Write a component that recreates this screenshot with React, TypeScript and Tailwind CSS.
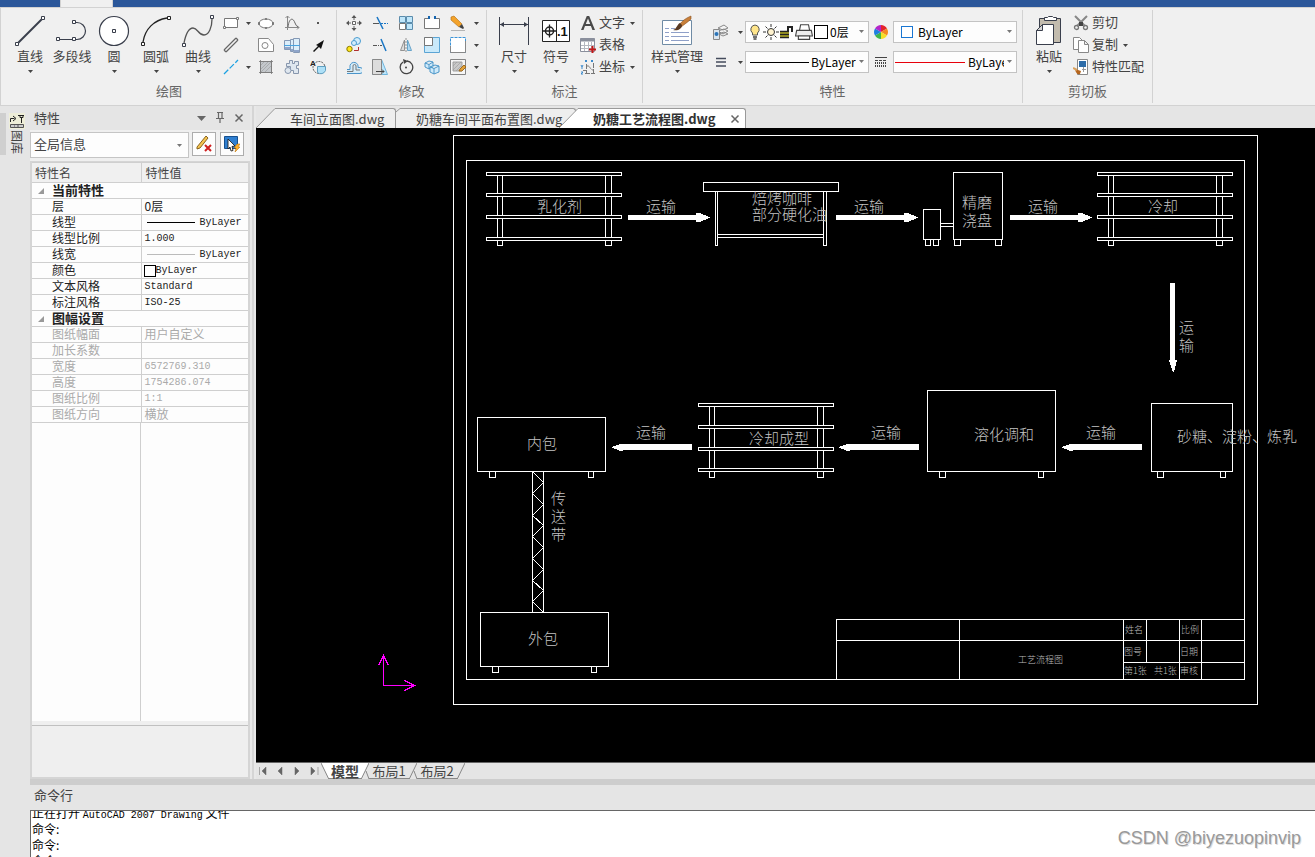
import { useState } from "react"
import type { ReactNode } from "react"
import clsx from "clsx"

const ink = "#3a3f4c"

const bigIcons: Record<string, ReactNode> = {
  line: (
    <g fill="#fff" stroke={ink}>
      <path d="M4 28L28 4" strokeWidth="2" />
      <path d="M1.500 27.500h3v3h-3zM27.500 1.500h3v3h-3z" />
    </g>
  ),
  polyline: (
    <g fill="none" stroke={ink}>
      <path d="M4 24.500h17a8.500 8.500 0 0 0 0-17h-3" strokeWidth="1.200" />
      <path d="M.5 22.500h3v3h-3zM16.500 22.500h3v3h-3zM16.500 5.500h3v3h-3z" fill="#fff" />
    </g>
  ),
  circle: (
    <g fill="#fff" stroke={ink}>
      <circle cx="16" cy="16" r="14.500" strokeWidth="1.200" />
      <path d="M14.500 14.500h3v3h-3z" />
    </g>
  ),
  arc: (
    <g fill="none" stroke="#222">
      <path d="M3 27C5 14 14 5 27 3" strokeWidth="1.300" />
      <path d="M1.500 27.500h3v3h-3zM27.500 1.500h3v3h-3z" fill="#fff" />
    </g>
  ),
  curve: (
    <g fill="none" stroke="#555">
      <path d="M2 28C4 18 7 13 11 13C16 13 16 20 22 20C27 20 30 12 30 4" strokeWidth="1.300" />
      <path d="M.5 28.500h3v3h-3zM28.500 .5h3v3h-3z" fill="#fff" stroke={ink} />
    </g>
  ),
  dimension: (
    <g stroke={ink} fill={ink}>
      <path d="M1.500 2v28M30.500 2v28M2 9.500h28" />
      <path d="M2 9.500l4-2.500v5zM30 9.500l-4-2.500v5z" stroke="none" />
    </g>
  ),
  symbol: (
    <g stroke="#222" fill="#fff">
      <path d="M2.500 5.500h27v21h-27zM16.500 5v22" />
      <circle cx="9.500" cy="16" r="4" fill="none" strokeWidth="1.500" />
      <path d="M3 16h13M9.500 9.500v13" strokeWidth="1.300" />
      <text x="17" y="21" fontSize="13" fontWeight="700" stroke="none" fill="#111" fontFamily="Liberation Sans, sans-serif">.1</text>
    </g>
  ),
  styles: (
    <g fill="none">
      <path d="M1.500 5.500h29v24h-29z" fill="#fff" stroke="#6f8ba5" />
      <path d="M4 13.500h4M4 17.500h4M4 21.500h4M4 25.500h4M10 13.500h4M10 17.500h18M10 21.500h18M10 25.500h18" stroke="#8fa0c8" />
      <path d="M30 1c-5 2-9 5-12 9l2 2c4-3 8-6 10-8z" fill="#c9803a" stroke="#8a5020" strokeWidth=".6" />
      <path d="M19 8c-3 1-3 6-7 7 5 1 9-1 9-5z" fill="#5b3a22" />
    </g>
  ),
  paste: (
    <g stroke={ink}>
      <path d="M6.500 3.500h21v24h-21z" fill="#c3bcae" />
      <path d="M11.500 5.500v-3h3l1-1h4l1 1h3v3z" fill="#fff" />
      <path d="M3.500 15.500l6-6h11v20h-17z" fill="#fff" />
      <path d="M3.500 15.500h6v-6z" fill="#d5d5d5" />
    </g>
  ),
}

const icons: Record<string, ReactNode> = {
  rect: (
    <g fill="#fff" stroke="#777">
      <path d="M1.500 3.500h13v9h-13z" />
      <path d="M.5 11.500h2v2h-2zM13.500 2.500h2v2h-2z" />
    </g>
  ),
  ellipse: (
    <g fill="#fff" stroke="#777">
      <ellipse cx="8" cy="8.500" rx="7" ry="4.500" />
      <path d="M.5 7.500h1v2h-1zM14.500 7.500h1v2h-1zM7.500 3.500h1v1h-1zM7.500 12.500h1v1h-1z" fill="#555" />
    </g>
  ),
  formula: (
    <g fill="none" stroke="#888">
      <path d="M3.500 1v14M1 12.500h14M1.500 3l2-2 2 2M13 10.500l2 2-2 2" />
      <path d="M4 12C5 3 9 2 11 8q1 3 3 4" stroke="#666" />
    </g>
  ),
  point: <path d="M7 7h2v2H7z" fill="#555" />,
  parallel: (
    <g stroke="#666" strokeWidth="1.200">
      <path d="M1 13L13 1M3 15L15 3M1 13l2 2M13 1l2 2" />
    </g>
  ),
  region: (
    <g fill="#fff" stroke="#888">
      <path d="M.5 1.500h10l5 6v7H.5z" />
      <circle cx="7" cy="8.500" r="3" />
    </g>
  ),
  shaft: (
    <g>
      <path d="M.5 3.500h6v-1h3v-1h6v14h-6v-1h-3v-2h-6z" fill="#dceefa" stroke="#8599b5" />
      <path d="M1 10h6v2h3v1h5v2h-5v-1H7v-2H1z" fill="#8fa5ca" />
      <path d="M6.500 3v10M9.500 2v12" stroke="#8599b5" />
      <path d="M0 8.500h16" stroke="#4aa3df" />
    </g>
  ),
  arrow: <path d="M3 14l5-5-2-1 8-5-3 9-2-2-5 5z" fill="#111" />,
  xline: <path d="M1 15L15 1" stroke="#1ba1e2" strokeWidth="1.300" strokeDasharray="6 2" />,
  hatch: (
    <g stroke="#999">
      <path d="M2.500 2.500h11v11h-11z" fill="#c4c8cc" />
      <path d="M3 6l3-3M3 10l7-7M3 13l10-10M7 13l6-6" strokeWidth=".6" />
      <path d="M1 2.500h14M2.500 1v14M13.500 1v14M1 13.500h14" stroke="#777" strokeWidth=".8" />
    </g>
  ),
  block: (
    <g fill="#dfe7ef" stroke="#8796ad">
      <path d="M2.500 4.500h3v-3h3v3h2v-2h4v4h-2v3h2v5h-5v-3h-3v-4h-4z" />
      <circle cx="4" cy="11.500" r="3" />
    </g>
  ),
  arcText: (
    <g fill="none" stroke="#555">
      <circle cx="9" cy="8.500" r="6" strokeDasharray="2 1" />
      <path d="M7.500 7.500h8v4a5 5 0 0 1-8 2z" fill="#aee0f7" stroke="#5f9fc0" />
      <text x="0" y="7" fontSize="8" fontWeight="700" stroke="none" fill="#222" fontFamily="Liberation Sans, sans-serif">A</text>
    </g>
  ),
  move: (
    <g fill="#555">
      <path d="M8 0l2.500 3h-5zM8 16l2.500-3h-5zM0 8l3-2.500v5zM16 8l-3-2.500v5z" />
      <path d="M6.500 6.500h3v3h-3zM8 3v2M8 11v2M3 8h2M11 8h2" fill="#fff" stroke="#666" />
    </g>
  ),
  trim: (
    <g fill="none" stroke="#1976c5">
      <path d="M5 2l6 12" strokeWidth="1.500" />
      <path d="M1 8.500h6" stroke="#555" />
      <path d="M9 8.500h7" strokeDasharray="2 1" />
    </g>
  ),
  array: (
    <g fill="#bfe6fa" stroke="#5b8cac">
      <path d="M1.500 1.500h6v6h-6zM8.500 1.500h6v6h-6zM8.500 8.500h6v6h-6z" />
      <path d="M1.500 8.500h6v6h-6z" fill="#fff" stroke="#777" />
    </g>
  ),
  breakAt: (
    <g fill="none" stroke="#777">
      <path d="M5 3.500H.5v10h15v-10H11" fill="#fff" />
      <path d="M4 1h2v3H4zM10 1h2v3h-2z" fill="#1565b0" stroke="none" />
    </g>
  ),
  erase: (
    <g>
      <path d="M1 2l3-1 8 8-3 3-8-7z" fill="#f3a32b" stroke="#b06c12" strokeWidth=".6" />
      <path d="M9 12l3-3 2 4-1 1z" fill="#444" />
      <path d="M1 15.500h14" stroke="#b5b5b5" />
    </g>
  ),
  copyObj: (
    <g>
      <circle cx="11" cy="4" r="3.500" fill="#d3edfb" stroke="#4a9cd0" />
      <circle cx="8" cy="6" r="2.500" fill="#d3edfb" stroke="#4a9cd0" />
      <circle cx="3.500" cy="12" r="2.700" fill="#ffe61a" stroke="#8a7a00" />
      <path d="M8 13.500h4.500V10" fill="none" stroke="#b03030" />
    </g>
  ),
  extend: (
    <g fill="none" stroke="#1976c5">
      <path d="M9 2l5 12" strokeWidth="1.500" />
      <path d="M1 8.500h9" stroke="#555" strokeDasharray="4 1 1 1" />
    </g>
  ),
  mirror: (
    <g strokeWidth=".9">
      <path d="M6.500 3v10.500h-4z" fill="#ddd" stroke="#888" />
      <path d="M9.500 3v10.500h4z" fill="#aed8f2" stroke="#5b9cc4" />
      <path d="M8 1v14" stroke="#888" strokeDasharray="2 1" />
    </g>
  ),
  scale: (
    <g>
      <path d="M.5 .5h15v15H.5z" fill="#c9e9fa" stroke="#5ba4d4" />
      <path d="M.5 .5h8v8h-8z" fill="#fff" stroke="#777" />
    </g>
  ),
  explode: (
    <g fill="#fff">
      <path d="M.5 .5h15v15H.5z" stroke="#3b94d9" strokeDasharray="3 1" />
      <path d="M15.500 4v11.500H.5V9" stroke="#888" fill="none" />
    </g>
  ),
  offset: (
    <g fill="none" stroke="#4a94c9">
      <path d="M1 14.500h13a3 3 0 0 0 0-6h-2a4 4 0 0 0-8-2v4H1" fill="#d6ecf8" />
      <path d="M1 12.500h6V7a1.500 1.500 0 0 1 3 0v4h4" stroke="#777" />
    </g>
  ),
  stretch: (
    <g>
      <path d="M.5 .5h9l6 15H.5z" fill="#bfe6fa" stroke="#6fb5dc" />
      <path d="M.5 .5h9v15h-9z" fill="#dcdcdc" stroke="#888" />
      <path d="M4 12.500h8M10 10.500l2 2-2 2" fill="none" stroke="#444" />
    </g>
  ),
  rotate: (
    <g fill="none" stroke="#444" strokeWidth="1.300">
      <path d="M9 2a6.300 6.300 0 1 1-4 1" />
      <path d="M5 0l5 2-4 3z" fill="#444" stroke="none" />
      <circle cx="8" cy="8.500" r="1" fill="#444" stroke="none" />
    </g>
  ),
  cubes: (
    <g fill="#cfeafa" stroke="#3f8fc4" strokeWidth=".9">
      <path d="M1 4l4-2 4 1v5l-4 2-4-2zM1 4l4 1.500L9 3M5 5.500V10" />
      <path d="M6 8l5-2 4 1v6l-5 2-4-2zM6 8l4 1.500L15 7M10 9.500V15" />
    </g>
  ),
  hatchEdit: (
    <g stroke="#999" strokeWidth=".9">
      <path d="M.5 .5h15v15H.5z" fill="#f6f6f6" stroke="#777" />
      <path d="M3 3h9v9H3z" fill="#c9c9c9" />
      <path d="M3 7l4-4M3 11l8-8M6 12l5-5" strokeWidth=".6" />
      <path d="M9 12l1-2 4-4 2 2-4 4z" fill="#e2a13a" stroke="#9a6414" />
    </g>
  ),
  text: <path d="M1 15L6.800 1h2.400L15 15h-2.600l-1.500-4H5l-1.500 4zM5.800 9h4.400L8 3.500z" fill="#4a4a4a" />,
  table: (
    <g>
      <path d="M.5 1.500h14v13H.5z" fill="#fff" stroke="#8a8f9c" />
      <path d="M.5 1.500h14v3H.5z" fill="#8a8f9c" />
      <path d="M1 8.500h13M1 11.500h13M4.500 5v9M8.500 5v9M11.500 5v9" stroke="#b5b8c0" />
      <path d="M9 12.500h7M12.500 9v7" stroke="#c01818" strokeWidth="2" />
    </g>
  ),
  coord: (
    <g fill="none" stroke="#777">
      <path d="M6.500 5v10M3 11.500h3M5 14.500h10M13.500 4v11M7 7c3-1 3 4 6 4" strokeDasharray="5 1" />
      <path d="M5 1l2 2M7 1l-2 2M11 1l2 2M13 1l-2 2M1 6l1 2 1-2M2 8v2M1 13h2l-2 2h2" stroke="#3c8bcd" />
    </g>
  ),
  layers: (
    <g fill="#f4f4f4" stroke="#888">
      <path d="M5 4l6-3 4 3-5 2zM5 7l6-2 4 2-5 3zM6 10l5-2 4 2-5 2z" />
      <path d="M.5 5.500h6v10h-6z" fill="#dbe5ee" />
      <circle cx="3.500" cy="10" r="2" fill="#2a74b8" stroke="none" />
    </g>
  ),
  lineweight: <path d="M3 4.500h10M3 8h10M3 12h10" stroke="#444b5c" strokeWidth="1.500" />,
  linetype: (
    <g stroke="#444">
      <path d="M2 3.500h12" />
      <path d="M2 6.500h12" strokeDasharray="3 1" />
      <path d="M2 9h12M2 12h12" strokeWidth="2" strokeDasharray="1 1" />
    </g>
  ),
  wheel: (
    <g>
      <path d="M8 8V1a7 7 0 0 1 6 3.500z" fill="#e3242b" />
      <path d="M8 8l6-3.500a7 7 0 0 1 0 7z" fill="#f58a1f" />
      <path d="M8 8l6 3.500A7 7 0 0 1 8 15z" fill="#f6de27" />
      <path d="M8 8v7a7 7 0 0 1-6-3.500z" fill="#3fb54a" />
      <path d="M8 8l-6 3.500a7 7 0 0 1 0-7z" fill="#1e7fe0" />
      <path d="M8 8L2 4.500A7 7 0 0 1 8 1z" fill="#b425c9" />
    </g>
  ),
  cut: (
    <g fill="none" stroke="#777">
      <path d="M2 1l10 10M14 1L4 11" stroke="#888" strokeWidth="2" />
      <path d="M6 7h4v4H6z" fill="#444" stroke="none" />
      <circle cx="3.500" cy="12.500" r="2" strokeWidth="1.300" />
      <circle cx="12.500" cy="12.500" r="2" strokeWidth="1.300" />
    </g>
  ),
  copy: (
    <g fill="#fff" stroke="#888">
      <path d="M.5 .5h6l3 3v9h-9z" />
      <path d="M5.500 3.500h6l4 4v8h-10zM11.500 3.500v4h4" />
    </g>
  ),
  match: (
    <g>
      <path d="M4.500 .5h10v15h-10z" fill="#fff" stroke="#888" />
      <path d="M6 2h7v6H6z" fill="#2d6ca8" />
      <path d="M9 10.500h4M10.500 8v5" stroke="#999" />
      <path d="M2 10l3 1 3 1-1 3c-3 1-4-1-5-5z" fill="#b5651d" />
      <path d="M0 9l4 2" stroke="#d9a05b" strokeWidth="2" />
    </g>
  ),
  bulb: (
    <g>
      <path d="M8 1a4.500 4.500 0 0 0-2.500 8v2h5V9A4.500 4.500 0 0 0 8 1z" fill="#ffe58a" stroke="#555" />
      <path d="M6 13h4M6.500 15h3" stroke="#444" strokeWidth="1.500" />
    </g>
  ),
  sun: (
    <g fill="none" stroke="#333">
      <circle cx="8" cy="8" r="3.500" fill="#fff3cf" />
      <path d="M8 0v3M8 13v3M0 8h3M13 8h3M2.500 2.500l2 2M11.500 11.500l2 2M2.500 13.500l2-2M11.500 4.500l2-2" />
    </g>
  ),
  lock: (
    <g fill="none" stroke="#222" strokeWidth="1.500">
      <path d="M1 7h9v7H1z" fill="#b3ad20" stroke="none" />
      <path d="M1 7.500h9M1 10.500h9M1 13.500h9" />
      <path d="M9 7V3h4v5" strokeWidth="2" />
    </g>
  ),
  printer: (
    <g fill="#eee" stroke="#444">
      <path d="M4 6.500l1-5h7l1 5" fill="#fff" />
      <path d="M1.500 6.500h13l1 5h-15z" />
      <path d="M3 11.500h10v3H3z" fill="#fff" />
    </g>
  ),
  pencilX: (
    <g>
      <path d="M1 11L10 0l2 2-8 10-3 1z" fill="#f5c451" stroke="#7a5510" strokeWidth=".9" />
      <path d="M9 9l6 6M15 9l-6 6" stroke="#d02020" strokeWidth="2" />
    </g>
  ),
  picker: (
    <g>
      <path d="M.5 .5h13v12H.5z" fill="#2f7fd0" stroke="#16508f" />
      <path d="M4 3l7 7-3 .5 1 4-2 .5-1-4-2 2z" fill="#fff" stroke="#222" strokeWidth=".9" />
      <path d="M13 8l-3 4h2l-1 4 5-5h-2l2-3z" fill="#ffb12b" stroke="#b56a00" strokeWidth=".5" />
    </g>
  ),
  pin: <path d="M5 2.500h6M6.500 2v6M10 2v6M4 8.500h8M8 9v4" stroke="#666" strokeWidth="1.200" />,
  close: <path d="M4.500 4.500l7 7M11.500 4.500l-7 7" stroke="#666" strokeWidth="1.500" />,
  down: <path d="M4 6h9l-4.500 5z" fill="#666" />,
}

const Icon = ({ name, className = "size-4" }: { name: string; className?: string }) => (
  <svg viewBox="0 0 16 16" className={clsx("shrink-0", className)} aria-hidden="true">
    {icons[name]}
  </svg>
)

const Caret = ({ className = "text-[#444]" }: { className?: string }) => (
  <svg viewBox="0 0 5 3" className={clsx("h-[3px] w-[5px] shrink-0", className)} aria-hidden="true">
    <path d="M0 0h5L2.500 3z" fill="currentColor" />
  </svg>
)

const BigButton = ({ icon, label, caret = true, wide = false }: { icon: string; label: string; caret?: boolean; wide?: boolean }) => (
  <button type="button" className={clsx("flex flex-col items-center whitespace-nowrap", wide ? "w-[60px]" : "w-[42px]")}>
    <svg viewBox="0 0 32 32" className="size-8" aria-hidden="true">
      {bigIcons[icon]}
    </svg>
    <span className="h-5 leading-[18px]">{label}</span>
    <span className="flex h-2 items-center">{caret && <Caret />}</span>
  </button>
)

const SmallButton = ({ icon, label }: { icon: string; label: string }) => (
  <button type="button" aria-label={label} className="flex h-[22px] items-center justify-center">
    <Icon name={icon} />
  </button>
)

const CaretButton = ({ label }: { label: string }) => (
  <button type="button" aria-label={label} className="flex h-[22px] w-[10px] items-center justify-center">
    <Caret />
  </button>
)

const TextButton = ({ icon, label, caret = false }: { icon: string; label: string; caret?: boolean }) => (
  <button type="button" className="flex h-[22px] items-center whitespace-nowrap">
    <span className="flex w-[22px] justify-center">
      <Icon name={icon} />
    </span>
    <span className="h-5 leading-[18px]">{label}</span>
    {caret && <Caret className="ml-[5px] text-[#444]" />}
  </button>
)

const Group = ({ title, className, children }: { title: string; className?: string; children: ReactNode }) => (
  <section className="my-[2px] flex flex-col border-r border-[#d2d2d2]">
    <div className={clsx("flex h-[73px] pt-[5px]", className)}>{children}</div>
    <h2 className="text-center leading-4 text-[#666]">{title}</h2>
  </section>
)

const RibbonSelect = ({ label, value, pad, children }: { label: string; value: string; pad: string; children: ReactNode }) => (
  <div className="relative h-[22px] w-[124px] border border-[#c3c3c3] bg-[#fdfdfd]">
    <select aria-label={label} className={clsx("h-full w-full appearance-none bg-transparent pr-3 text-[12px] leading-5 text-black outline-none", pad)}>
      <option>{value}</option>
    </select>
    <div className="pointer-events-none absolute inset-0 flex items-center pl-1">{children}</div>
    <Caret className="pointer-events-none absolute top-2 right-1 text-[#777]" />
  </div>
)

const modifyRows = [
  [["move", "移动"], ["trim", "裁剪"], ["array", "阵列"], ["breakAt", "打断"], ["erase", "删除"]],
  [["copyObj", "平移复制"], ["extend", "延伸"], ["mirror", "镜像"], ["scale", "缩放"], ["explode", "分解"]],
  [["offset", "等距线"], ["stretch", "拉伸"], ["rotate", "旋转"], ["cubes", "三视图"], ["hatchEdit", "剖面线编辑"]],
]

const Ribbon = () => (
  <header>
    <div className="flex h-[7px] bg-[#2b579a]">
      <div className="ml-[60px] w-[53px] border-x border-[#d2d2d2] bg-[#f0f0f0]" />
    </div>
    <div className="flex h-[99px] border-y border-l border-[#d2d2d2] bg-[#f0f0f0] pl-px">
      <Group title="绘图" className="pr-[5px] pl-[7px]">
        <BigButton icon="line" label="直线" />
        <BigButton icon="polyline" label="多段线" caret={false} />
        <BigButton icon="circle" label="圆" />
        <BigButton icon="arc" label="圆弧" />
        <BigButton icon="curve" label="曲线" />
        <div className="-mt-[3px] grid grid-cols-[24px_10px_26px_26px_26px] content-start">
          <SmallButton icon="rect" label="矩形" />
          <CaretButton label="矩形选项" />
          <SmallButton icon="ellipse" label="椭圆" />
          <SmallButton icon="formula" label="公式曲线" />
          <SmallButton icon="point" label="点" />
          <SmallButton icon="parallel" label="平行线" />
          <span />
          <SmallButton icon="region" label="轮廓" />
          <SmallButton icon="shaft" label="孔/轴" />
          <SmallButton icon="arrow" label="箭头" />
          <SmallButton icon="xline" label="构造线" />
          <CaretButton label="构造线选项" />
          <SmallButton icon="hatch" label="剖面线" />
          <SmallButton icon="block" label="块" />
          <SmallButton icon="arcText" label="弧线文字" />
        </div>
      </Group>

      <Group title="修改" className="pr-[5px] pl-1">
        <div className="-mt-[3px]">
          {modifyRows.map((row, i) => (
            <div key={i} className="grid grid-cols-[26px_26px_26px_26px_26px_10px]">
              {row.map(([icon, label]) => (
                <SmallButton key={icon} icon={icon} label={label} />
              ))}
              <CaretButton label={row[4][1] + "选项"} />
            </div>
          ))}
        </div>
      </Group>

      <Group title="标注" className="pr-[5px] pl-[6px]">
        <BigButton icon="dimension" label="尺寸" />
        <BigButton icon="symbol" label="符号" />
        <div className="-mt-[3px] w-[60px]">
          <TextButton icon="text" label="文字" caret />
          <TextButton icon="table" label="表格" />
          <TextButton icon="coord" label="坐标" caret />
        </div>
      </Group>

      <Group title="特性" className="pr-[5px] pl-1">
        <BigButton icon="styles" label="样式管理" wide />
        <div className="mt-[6px] grid grid-cols-[28px_10px_124px_24px_124px] content-start items-center gap-y-2">
          <SmallButton icon="layers" label="图层" />
          <CaretButton label="图层选项" />
          <RibbonSelect label="当前图层" value="0层" pad="pl-[84px]">
            <Icon name="bulb" className="-ml-[3px] size-4" />
            <Icon name="sun" />
            <Icon name="lock" />
            <Icon name="printer" className="size-[18px]" />
            <span className="ml-px size-[14px] border border-black bg-white" />
          </RibbonSelect>
          <SmallButton icon="wheel" label="颜色" />
          <RibbonSelect label="当前颜色" value="ByLayer" pad="pl-[24px]">
            <span className="ml-[3px] size-3 border border-[#1976d2] bg-white" />
          </RibbonSelect>
          <SmallButton icon="lineweight" label="线宽" />
          <CaretButton label="线宽选项" />
          <RibbonSelect label="当前线宽" value="ByLayer" pad="pl-[65px]">
            <span className="h-px w-[59px] bg-black" />
          </RibbonSelect>
          <SmallButton icon="linetype" label="线型" />
          <RibbonSelect label="当前线型" value="ByLayer" pad="pl-[74px]">
            <span className="-ml-[3px] h-px w-[70px] bg-red-600" />
          </RibbonSelect>
        </div>
      </Group>

      <Group title="剪切板" className="pr-2 pl-[5px]">
        <BigButton icon="paste" label="粘贴" />
        <div className="-mt-[3px]">
          <TextButton icon="cut" label="剪切" />
          <TextButton icon="copy" label="复制" caret />
          <TextButton icon="match" label="特性匹配" />
        </div>
      </Group>
    </div>
  </header>
)

type Prop = { name: string; value?: string; cjk?: boolean; swatch?: "line" | "thin" | "box" }

const currentProps: Prop[] = [
  { name: "层", value: "0层", cjk: true },
  { name: "线型", value: "ByLayer", swatch: "line" },
  { name: "线型比例", value: "1.000" },
  { name: "线宽", value: "ByLayer", swatch: "thin" },
  { name: "颜色", value: "ByLayer", swatch: "box" },
  { name: "文本风格", value: "Standard" },
  { name: "标注风格", value: "ISO-25" },
]

const sheetProps: Prop[] = [
  { name: "图纸幅面", value: "用户自定义", cjk: true },
  { name: "加长系数" },
  { name: "宽度", value: "6572769.310" },
  { name: "高度", value: "1754286.074" },
  { name: "图纸比例", value: "1:1" },
  { name: "图纸方向", value: "横放", cjk: true },
]

const PropSection = ({ title, rows, muted = false }: { title: string; rows: Prop[]; muted?: boolean }) => (
  <tbody className={muted ? "text-[#aaa]" : "text-[#222]"}>
    <tr className="h-4 border-b border-[#cfcfcf]">
      <th colSpan={2} className="p-0 text-left text-[13px] leading-[13px] font-bold text-[#222]">
        <span className="flex h-[15px] items-start">
          <svg viewBox="0 0 6 6" className="mt-[5px] mr-2 ml-1.5 size-1.5" aria-hidden="true">
            <path d="M6 0v6H0z" fill="#999" />
          </svg>
          {title}
        </span>
      </th>
    </tr>
    {rows.map((row) => (
      <tr key={row.name} className="h-4 border-b border-[#cfcfcf]">
        <th scope="row" className="border-r border-[#cfcfcf] p-0 pl-5 text-left align-top leading-[13px] font-normal">
          {row.name}
        </th>
        <td className={clsx("p-0 pl-[3px] align-top", row.cjk ? "leading-[13px]" : "font-['Liberation_Mono',monospace] text-[10px] leading-[15px]")}>
          <span className="flex items-center">
            {row.swatch === "line" && <span className="mr-[5px] ml-[2px] h-px w-12 bg-black" />}
            {row.swatch === "thin" && <span className="mr-[5px] ml-[2px] h-px w-12 bg-[#bbb]" />}
            {row.swatch === "box" && <span className="-ml-px size-3 border border-black bg-white" />}
            {row.value}
          </span>
        </td>
      </tr>
    ))}
  </tbody>
)

const PropertiesPanel = () => (
  <section className="flex w-[220px] shrink-0 flex-col bg-[#e5e5e5]">
    <div className="flex h-[24px] items-center pr-[3px] pl-1">
      <h2 className="mr-auto">特性</h2>
      <div className="flex gap-[3px]">
        <button type="button" aria-label="菜单"><Icon name="down" /></button>
        <button type="button" aria-label="固定"><Icon name="pin" /></button>
        <button type="button" aria-label="关闭"><Icon name="close" /></button>
      </div>
    </div>
    <div className="flex gap-1 bg-[#efefef] pt-[2px] pb-[3px]">
      <div className="relative h-[26px] w-[159px] border border-[#c5c5c5] bg-[#fdfdfd]">
        <select aria-label="选择对象" className="h-full w-full appearance-none bg-transparent pb-[2px] pl-[3px] outline-none">
          <option>全局信息</option>
        </select>
        <Caret className="pointer-events-none absolute top-[11px] right-[6px] text-[#777]" />
      </div>
      <button type="button" aria-label="取消选择" className="-ml-px flex size-6 items-center justify-center border border-[#adadad] bg-[#fdfdfd]">
        <Icon name="pencilX" />
      </button>
      <button type="button" aria-label="快速选择" className="flex size-6 items-center justify-center border border-[#adadad] bg-[#fdfdfd]">
        <Icon name="picker" />
      </button>
    </div>
    <div className="flex min-h-0 flex-1 flex-col border-2 border-t border-[#d5d5d5] bg-[#fdfdfd]">
      <table className="w-full table-fixed border-collapse text-[12px]">
        <thead className="bg-[#f0f0f0] text-[#444]">
          <tr className="h-5 border-y border-[#cfcfcf]">
            <th className="w-[109px] border-r border-[#cfcfcf] p-0 pl-[3px] text-left leading-[18px] font-normal">特性名</th>
            <th className="p-0 pl-1 text-left leading-[18px] font-normal">特性值</th>
          </tr>
        </thead>
        <PropSection title="当前特性" rows={currentProps} />
        <PropSection title="图幅设置" rows={sheetProps} muted />
      </table>
      <div className="w-[109px] flex-1 border-r border-[#cfcfcf]" />
      <div className="h-14 border-t-4 border-[#efefef] bg-[#efefef]">
        <div className="border-t border-[#c0c0c0]" />
      </div>
    </div>
  </section>
)

const docs = ["车间立面图.dwg", "奶糖车间平面布置图.dwg", "奶糖工艺流程图.dwg"]

const DocTabs = () => {
  const [active, setActive] = useState(2)
  const widths = ["w-[140px]", "w-[180px]", "w-[187px] -ml-[17px]"]

  return (
    <nav className="flex h-[22px] items-end bg-[#e5e5e5]">
      {docs.map((doc, i) => (
        <div
          key={doc}
          className={clsx("relative flex h-5 items-stretch", widths[i], active === i ? "text-[#333]" : "text-[#444]")}
        >
          <svg viewBox="0 0 20 20" className="h-5 w-5 shrink-0" aria-hidden="true">
            <path
              d={i === 1 ? "M0 20V4L4 .5H20V20" : "M0 20L19 .5H20V20"}
              fill={active === i ? "#fff" : "#eee"}
            />
            <path d={i === 1 ? "M0 4L4 .5H20" : "M0 20L19 .5H20"} fill="none" stroke="#999" />
          </svg>
          <div className={clsx("flex flex-1 items-center rounded-tr-[3px] border-t border-r border-[#999]", active === i ? "bg-white" : "bg-[#eee]")}>
            <button
              type="button"
              onClick={() => setActive(i)}
              className={clsx("leading-[18px] whitespace-nowrap", i === 1 ? "pl-0" : "pl-[14px]", active === i && "font-bold")}
            >
              {doc}
            </button>
            {active === i && (
              <button type="button" aria-label="关闭" className="mr-[2px] ml-auto">
                <Icon name="close" />
              </button>
            )}
          </div>
        </div>
      ))}
    </nav>
  )
}

const Shelf = ({ x, bars, bottom }: { x: number; bars: number[]; bottom: number }) => (
  <g>
    <rect x={x + 11} y={bars[0]} width="5" height={bottom - bars[0]} />
    <rect x={x + 119} y={bars[0]} width="6" height={bottom - bars[0]} />
    {bars.map((y) => (
      <rect key={y} x={x} y={y} width="135" height="3" />
    ))}
  </g>
)

const Machine = ({ x, y, w, h }: { x: number; y: number; w: number; h: number }) => (
  <g>
    <rect x={x} y={y} width={w} height={h} />
    <rect x={x + 12} y={y + h} width="6" height="6" />
    <rect x={x + w - 17} y={y + h} width="5" height="6" />
  </g>
)

const ArrowRight = ({ x }: { x: number }) => (
  <path d={`M${x} 215h68v-2h4l10 4.500-10 4.500h-4v-2h-68z`} fill="#fff" />
)

const ArrowLeft = ({ x }: { x: number }) => (
  <path d={`M${x} 447l10-3h71v6h-69v1h-3z`} fill="#fff" />
)

// [x, vertical centre, text]
const labels: [number, number, string][] = [
  [537, 205, "乳化剂"],
  [646, 205, "运输"],
  [752, 197, "焙烤咖啡"],
  [752, 213, "部分硬化油"],
  [854, 205, "运输"],
  [962, 201, "精磨"],
  [962, 219, "浇盘"],
  [1028, 205, "运输"],
  [1148, 205, "冷却"],
  [1179, 326, "运"],
  [1179, 344, "输"],
  [527, 442, "内包"],
  [636, 431, "运输"],
  [749, 437, "冷却成型"],
  [871, 431, "运输"],
  [974, 433, "溶化调和"],
  [1086, 431, "运输"],
  [1177, 435, "砂糖、淀粉、炼乳"],
  [551, 497, "传"],
  [551, 515, "送"],
  [551, 533, "带"],
  [528, 637, "外包"],
]

const stampLabels: [number, number, string][] = [
  [1125, 629, "姓名"],
  [1181, 629, "比例"],
  [1124, 651, "图号"],
  [1180, 651, "日期"],
  [1124, 670, "第1张"],
  [1154, 670, "共1张"],
  [1180, 670, "审核"],
  [1018, 659, "工艺流程图"],
]

const Drawing = () => (
  <svg viewBox="256 128 1059 634" preserveAspectRatio="xMinYMin meet" className="block min-h-0 w-full flex-1 bg-black font-['Noto_Sans_CJK_SC',sans-serif] font-light">
    <g fill="black" stroke="#fff" shapeRendering="crispEdges" transform="translate(.5 .5)">
      <rect x="453" y="135" width="804" height="569" />
      <rect x="466" y="160" width="778" height="519" />
      <Shelf x={486} bars={[172, 193, 215, 237]} bottom={245} />
      <Shelf x={1097} bars={[172, 193, 215, 237]} bottom={245} />
      <Shelf x={698} bars={[403, 425, 447, 468]} bottom={477} />

      <path d="M703 182h135v9h-135zM715 191v54h2v-54M823 191v54h3v-54M717 234h106M717 237h106" />
      <path d="M953 172h49v67h-49zM923 209h17v30h-17zM940 223h13M940 226h13" />
      <path d="M925 239v6h5v-6M933 239v6h5v-6M954 239v6h6v-6M995 239v6h6v-6" />

      <Machine x={477} y={417} w={128} h={54} />
      <Machine x={927} y={390} w={128} h={81} />
      <rect x="1151" y="403" width="81" height="68" />
      <path d="M1157 471v6h6v-6M1220 471v6h5v-6" />
      <path d="M532 471v141M543 471v141" />
      <path d="M532 471l11 11-11 11 11 11-11 11 11 10-11 11 11 11-11 11 11 11-11 11 11 10-11 11 11 11" fill="none" />
      <Machine x={480} y={612} w={128} h={54} />

      <path d="M836 679v-60h408M836 640h408M959 619v60M1123 619v60M1146 619v43M1179 619v60M1201 619v60M1123 662h121" fill="none" />
      <path d="M383 655v30h31M378 665l5-10 5 10M404 680l10 5-10 5" fill="none" stroke="#f0f" />
    </g>

    <g shapeRendering="crispEdges">
      <ArrowRight x={628} />
      <ArrowRight x={836} />
      <ArrowRight x={1010} />
      <path d="M1170 283h5v77h2l-3 12h-1l-4-12h1z" fill="#fff" />
      <ArrowLeft x={611} />
      <ArrowLeft x={838} />
      <ArrowLeft x={1061} />
    </g>

    <g fill="#c4c4c4" fontSize="15" dominantBaseline="central">
      {labels.map(([x, y, text]) => (
        <text key={`${x}-${y}`} x={x} y={y}>{text}</text>
      ))}
    </g>
    <g fill="#bbb" fontSize="9" dominantBaseline="central">
      {stampLabels.map(([x, y, text]) => (
        <text key={`${x}-${y}`} x={x} y={y}>{text}</text>
      ))}
    </g>
  </svg>
)

const Slash = ({ left = false, right = false }: { left?: boolean; right?: boolean }) => (
  <svg viewBox="0 0 8 17" className="h-[17px] w-2 shrink-0" aria-hidden="true">
    {left && <path d="M0 0H8L0 16z" fill="#fff" />}
    <path d="M8 0L0 16.500" stroke="#888" />
    {right && <path d="M5 8L8 16" stroke="#888" />}
  </svg>
)

const navPaths = ["M2.500 4v8M9 4v8L5 8z", "M9 4v8L5 8z", "M6 4v8l4-4z", "M6 4v8l4-4zM13 4v8"]
const navLabels = ["第一个", "上一个", "下一个", "最后一个"]

const LayoutTabs = () => (
  <nav className="flex h-[17px] shrink-0 items-start border-t border-[#666] bg-[#e5e5e5] pl-px leading-4">
    {navPaths.map((d, i) => (
      <button key={d} type="button" aria-label={navLabels[i]} className="h-4 w-4">
        <svg viewBox="0 0 16 16" className="size-4" aria-hidden="true">
          <path d={d} fill="#666" stroke="#666" strokeWidth=".5" />
        </svg>
      </button>
    ))}
    <svg viewBox="0 0 8 17" className="h-[17px] w-2 shrink-0" aria-hidden="true">
      <path d="M0 0H8V16z" fill="#fff" />
      <path d="M0 0L8 16.500" stroke="#888" />
    </svg>
    <button type="button" className="h-4 w-8 border-b border-[#888] bg-white text-[14px] leading-3 font-bold whitespace-nowrap">模型</button>
    <Slash left right />
    <button type="button" className="h-4 w-[40px] border-b border-[#888] leading-3">布局1</button>
    <Slash right />
    <button type="button" className="h-4 w-[40px] border-b border-[#888] leading-3">布局2</button>
    <Slash />
  </nav>
)

export default function App() {
  return (
    <div className="flex h-screen flex-col overflow-hidden bg-[#e5e5e5] font-['Noto_Sans_CJK_SC',sans-serif] text-[13px] text-[#444]">
      <Ribbon />
      <div className="flex min-h-0 flex-1">
        <aside className="flex w-[30px] shrink-0 items-start pt-[7px]">
          <div className="h-[42px] w-[6px] bg-[#cfcfcf]" />
          <button type="button" className="ml-[3px] flex w-4 flex-col items-center gap-px text-[12px] leading-4">
            <svg viewBox="0 0 16 16" className="size-4 bg-[#eeeed8]" aria-hidden="true">
              <path d="M1.500 9V5.500h4M4 3l3 2.500L4 8M9 2.500h6M11 2.500v2h3v-2M12.500 5v5" fill="none" stroke="#222" />
              <path d="M1.500 11.500h13v3h-13zM5 13h1M8 13h2" fill="#ccc" stroke="#555" />
            </svg>
            <span className="[writing-mode:vertical-rl] [text-orientation:sideways]">图库</span>
          </button>
        </aside>

        <div className="flex min-w-0 flex-1 flex-col">
          <div className="flex min-h-0 flex-1">
            <PropertiesPanel />
            <div className="w-[6px] shrink-0 border-x-2 border-[#e8e8e8] bg-[#d5d5d5]" />
            <main className="flex min-w-0 flex-1 flex-col">
              <DocTabs />
              <Drawing />
              <LayoutTabs />
            </main>
          </div>

          <section className="shrink-0 border-t-[6px] border-[#cdcdcd]">
            <h2 className="h-[25px] pl-1 leading-5">命令行</h2>
            <div className="relative h-[47px] overflow-hidden border-t border-l border-[#666] bg-white text-[12px] leading-4 text-black">
              <div className="-mt-[6px] pl-px">
                <p className="h-4">
                  正在打开 <span className="font-['Liberation_Mono',monospace] text-[10px]">AutoCAD 2007 Drawing</span> 文件
                </p>
                <p className="h-4">命令:</p>
                <p className="h-4">命令:</p>
                <p className="h-4">命令:</p>
              </div>
              <p className="absolute top-[16px] right-[14px] font-['Liberation_Sans',sans-serif] text-[18px] leading-[22px] text-[#999] [text-shadow:1px_1px_0_#ddd]">
                CSDN @biyezuopinvip
              </p>
            </div>
          </section>
        </div>
      </div>
    </div>
  )
}
